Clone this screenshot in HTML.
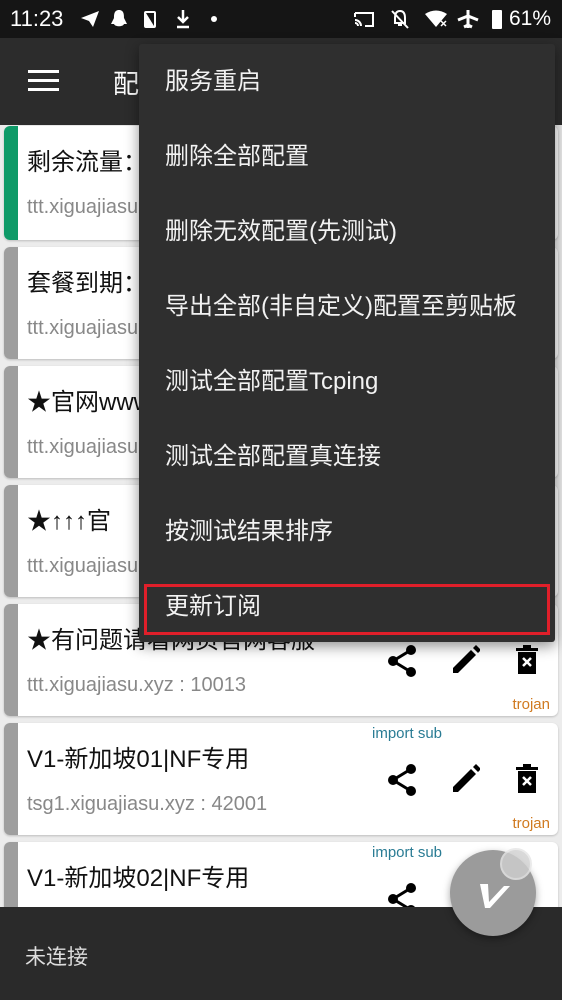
<!DOCTYPE html>
<html><head><meta charset="utf-8"><style>
*{margin:0;padding:0;box-sizing:border-box}
body{width:562px;height:1000px;overflow:hidden;background:#ececec;font-family:"Liberation Sans","Noto Sans CJK SC",sans-serif;position:relative}
.sb{position:absolute;left:0;top:0;width:562px;height:38px;background:#151515;color:#fff;font-size:20px}
.ab{position:absolute;left:0;top:38px;width:562px;height:87px;background:#2c2c2c;color:#fff}
.card{position:absolute;left:4px;width:554px;height:112px;background:#fff;border-radius:6px;overflow:hidden;box-shadow:0 1px 2px rgba(0,0,0,.2)}
.card .st{position:absolute;left:0;top:0;width:14px;height:100%;background:#9e9e9e}
.card .t{position:absolute;left:23px;top:16px;font-size:24px;color:#111;white-space:nowrap}
.card .s{position:absolute;left:23px;top:70px;font-size:20px;color:#888;white-space:nowrap}
.card .imp{position:absolute;left:368px;top:2px;font-size:15px;color:#2a7c94}
.card .tr{position:absolute;right:8px;bottom:3px;font-size:15px;color:#d07a20}
.ic{position:absolute;top:40px}
.menu{position:absolute;left:139px;top:44px;width:416px;height:598px;background:#2f2f2f;box-shadow:0 4px 14px rgba(0,0,0,.45);border-radius:3px}
.mi{position:absolute;left:26px;font-size:24px;color:#f2f2f2;white-space:nowrap;line-height:30px}
.bot{position:absolute;left:0;top:907px;width:562px;height:93px;background:#2a2a2a;color:#ddd;font-size:21px}
</style></head><body>
<div class="sb">
<span style="position:absolute;left:10px;top:6px;font-size:22px">11:23</span>
<svg style="position:absolute;left:80px;top:10px" width="20" height="18"><path d="M1 8L19 1L13 17L9 11Z" fill="#fff"/></svg>
<svg style="position:absolute;left:110px;top:9px" width="18" height="20"><path d="M9 1C4 1 4 6 4 9L1 15L4 15C5 18 13 18 14 15L17 15L14 9C14 6 14 1 9 1Z" fill="#fff"/></svg>
<svg style="position:absolute;left:143px;top:10px" width="14" height="19"><rect x="1" y="1" width="12" height="17" rx="2" fill="#fff"/><path d="M3 3L11 3L11 16Z" fill="#151515"/></svg>
<svg style="position:absolute;left:175px;top:9px" width="16" height="20"><path d="M8 1V12M3 8L8 13L13 8M2 18H14" stroke="#fff" stroke-width="2.5" fill="none"/></svg>
<div style="position:absolute;left:211px;top:16px;width:6px;height:6px;border-radius:50%;background:#fff"></div>
<svg style="position:absolute;left:353px;top:10px" width="22" height="18"><path d="M2 3H20V16H12M2 7V3M2 10a6 6 0 0 1 6 6M2 13a3 3 0 0 1 3 3" stroke="#fff" stroke-width="2" fill="none"/></svg>
<svg style="position:absolute;left:390px;top:9px" width="20" height="20"><path d="M10 2C6 2 5 5 5 9V14H15V9C15 5 14 2 10 2ZM8 16H12M2 2L18 19" stroke="#fff" stroke-width="2" fill="none"/></svg>
<svg style="position:absolute;left:424px;top:10px" width="26" height="18"><path d="M1 4Q12 -3 23 4L12 17Z" fill="#fff"/><path d="M17 11L22 16M22 11L17 16" stroke="#fff" stroke-width="1.5"/></svg>
<svg style="position:absolute;left:457px;top:9px" width="22" height="20"><path d="M11 1V19M1 11L11 7L21 11M7 18L11 16L15 18" stroke="#fff" stroke-width="3" fill="none"/></svg>
<div style="position:absolute;left:492px;top:10px;width:10px;height:19px;background:#fff;border-radius:1px"></div>
<span style="position:absolute;left:509px;top:7px;font-size:21px">61%</span>
</div>
<div class="ab">
<div style="position:absolute;left:28px;top:32px;width:31px;height:3px;background:#fff;box-shadow:0 9px 0 #fff,0 18px 0 #fff"></div>
<span style="position:absolute;left:113px;top:26px;font-size:26px">配置文件</span>
</div>

<div class="card" style="top:126px;height:114px"><div class="st" style="background:#0f9a68"></div><div class="t">剩余流量：</div><div class="s">ttt.xiguajiasu.xyz : 10013</div></div>
<div class="card" style="top:247px"><div class="st"></div><div class="t">套餐到期：</div><div class="s">ttt.xiguajiasu.xyz : 10013</div></div>
<div class="card" style="top:366px"><div class="st"></div><div class="t">★官网www</div><div class="s">ttt.xiguajiasu.xyz : 10013</div></div>
<div class="card" style="top:485px"><div class="st"></div><div class="t">★↑↑↑官</div><div class="s">ttt.xiguajiasu.xyz : 10013</div></div>
<div class="card" style="top:604px"><div class="st"></div><div class="t">★有问题请看网页官网客服</div><div class="s">ttt.xiguajiasu.xyz : 10013</div>
<svg class="ic" style="left:383px" width="30" height="34" viewBox="0 0 30 34"><circle cx="24" cy="6" r="5"/><circle cx="6" cy="17" r="5"/><circle cx="24" cy="28" r="5"/><path d="M24 6L6 17L24 28" stroke="#000" stroke-width="3" fill="none"/></svg>
<svg class="ic" style="left:446px" width="30" height="32"><path d="M3 24L21 6L26 11L8 29L3 29Z" fill="#000"/><path d="M23 4L26 1L31 6L28 9Z" fill="#000"/></svg>
<svg class="ic" style="left:512px" width="22" height="32"><rect x="0" y="4" width="22" height="3" fill="#000"/><rect x="7" y="1" width="8" height="4" fill="#000"/><rect x="2" y="8" width="18" height="22" fill="#000"/><path d="M7 14L15 22M15 14L7 22" stroke="#fff" stroke-width="2.5"/></svg>
<div class="tr">trojan</div></div>
<div class="card" style="top:723px"><div class="st"></div><div class="imp">import sub</div><div class="t">V1-新加坡01|NF专用</div><div class="s">tsg1.xiguajiasu.xyz : 42001</div>
<svg class="ic" style="left:383px" width="30" height="34" viewBox="0 0 30 34"><circle cx="24" cy="6" r="5"/><circle cx="6" cy="17" r="5"/><circle cx="24" cy="28" r="5"/><path d="M24 6L6 17L24 28" stroke="#000" stroke-width="3" fill="none"/></svg>
<svg class="ic" style="left:446px" width="30" height="32"><path d="M3 24L21 6L26 11L8 29L3 29Z" fill="#000"/><path d="M23 4L26 1L31 6L28 9Z" fill="#000"/></svg>
<svg class="ic" style="left:512px" width="22" height="32"><rect x="0" y="4" width="22" height="3" fill="#000"/><rect x="7" y="1" width="8" height="4" fill="#000"/><rect x="2" y="8" width="18" height="22" fill="#000"/><path d="M7 14L15 22M15 14L7 22" stroke="#fff" stroke-width="2.5"/></svg>
<div class="tr">trojan</div></div>
<div class="card" style="top:842px"><div class="st"></div><div class="imp">import sub</div><div class="t">V1-新加坡02|NF专用</div>
<svg class="ic" style="left:383px" width="30" height="34" viewBox="0 0 30 34"><circle cx="24" cy="6" r="5"/><circle cx="6" cy="17" r="5"/><circle cx="24" cy="28" r="5"/><path d="M24 6L6 17L24 28" stroke="#000" stroke-width="3" fill="none"/></svg>
</div>

<div class="bot"><span style="position:absolute;left:25px;top:34px">未连接</span></div>
<div style="position:absolute;left:450px;top:850px;width:86px;height:86px;border-radius:50%;background:#9b9b9b;box-shadow:0 3px 8px rgba(0,0,0,.35)">
<svg style="position:absolute;left:28px;top:30px" width="34" height="30"><path d="M2 4L10 4L11 22L26 6L32 6L12 28L7 28Z" fill="#fff"/></svg>
<div style="position:absolute;left:50px;top:-2px;width:32px;height:32px;border-radius:50%;background:#d0d0d0;border:2px solid #e6e6e6;opacity:.8"></div>
</div>

<div class="menu">
<div class="mi" style="top:23px">服务重启</div>
<div class="mi" style="top:98px">删除全部配置</div>
<div class="mi" style="top:173px">删除无效配置(先测试)</div>
<div class="mi" style="top:248px">导出全部(非自定义)配置至剪贴板</div>
<div class="mi" style="top:323px">测试全部配置Tcping</div>
<div class="mi" style="top:398px">测试全部配置真连接</div>
<div class="mi" style="top:473px">按测试结果排序</div>
<div class="mi" style="top:548px">更新订阅</div>
<div style="position:absolute;left:5px;top:540px;width:406px;height:51px;border:3px solid #e01f2a"></div>
</div>
</body></html>
